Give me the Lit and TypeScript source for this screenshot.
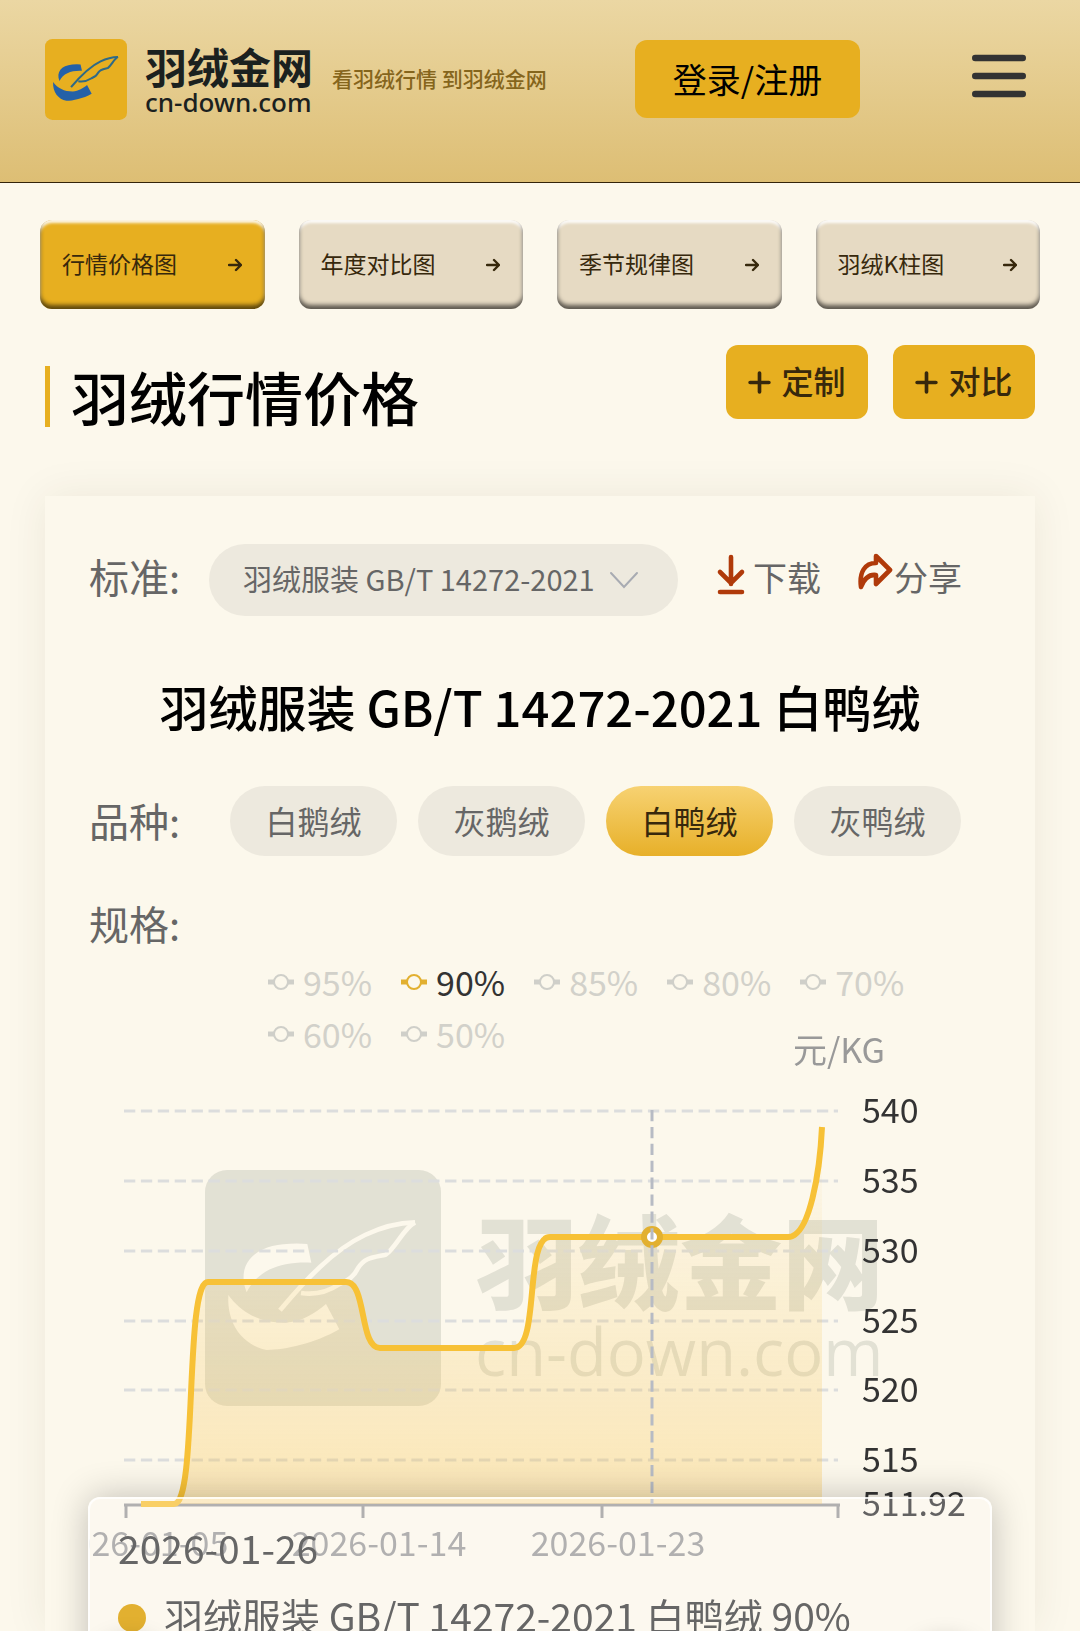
import { LitElement, html, css, svg } from "lit";
import { customElement, property, state } from "lit/decorators.js";
import { classMap } from "lit/directives/class-map.js";

const quill = svg`
  <path class="mark" d="M125 367C95 290 140 232 235 223Q270 219 307 222L319 278C225 274 160 300 125 367Z"/>
  <path class="mark" d="M70 375C110 430 165 458 240 458C290 456 330 430 363 402L403 478C330 520 240 540 185 540C115 525 65 465 70 375Z"/>
  <path class="feather" d="M225 421C300 330 385 240 480 195C540 166 590 158 630 157"/>
  <path class="feather" d="M630 157C594 176 574 232 542 254C505 262 478 262 458 296C446 322 420 336 402 343C362 370 322 374 288 369"/>`;

@customElement("brand-logo")
export class BrandLogo extends LitElement {
  static styles = css`
    .brand { display: flex; align-items: center; color: #1b211f; text-decoration: none; }
    .badge { width: 82px; height: 81px; flex: none; }
    .tile { fill: #e7af20; }
    .mark { fill: #2461a8; }
    .feather { fill: none; stroke: #2f6a86; stroke-width: 18; stroke-linejoin: round; }
    .words { margin-left: 18px; padding-bottom: 3px; display: flex; flex-direction: column; }
    .name { font-size: 42px; line-height: 48px; font-weight: 700; }
    .site { font-family: "Noto Sans", "Open Sans", sans-serif; font-size: 26px; line-height: 25px; font-weight: 500; }
    .motto { margin-left: 19px; padding-bottom: 4px; font-size: 21px; font-weight: 500; color: #85651c; white-space: nowrap; }
  `;
  render() {
    return html`<a class="brand" href="#">
      <svg class="badge" viewBox="0 0 708 708" preserveAspectRatio="none" aria-hidden="true">
        <rect class="tile" width="708" height="708" rx="64"/>${quill}
      </svg>
      <span class="words"><span class="name">羽绒金网</span><span class="site">cn-down.com</span></span>
      <span class="motto">看羽绒行情 到羽绒金网</span>
    </a>`;
  }
}

@customElement("price-chart")
export class PriceChart extends LitElement {
  static styles = css`
    :host { display: block; }
    .chart { display: block; width: 100%; height: auto; overflow: hidden; }
    .grid { stroke: #dcdddd; stroke-width: 3; stroke-dasharray: 11.3 5.6; }
    .axis { stroke: #999; stroke-width: 3; fill: none; }
    .series { stroke: #f7c136; stroke-width: 6; fill: none; }
    .pointer { stroke: #b7bbc4; stroke-width: 3; stroke-dasharray: 11.3 5.6; }
    .point { fill: #fff; stroke: #e2b030; stroke-width: 6; }
    .watermark { opacity: .15; fill: #555f53; }
    .mark { fill: #000; }
    .feather { fill: none; stroke: #000; stroke-width: 14; stroke-linejoin: round; }
    .wm-name { font-size: 102px; font-weight: 900; }
    .wm-site { font-family: "Open Sans", "Noto Sans", sans-serif; font-size: 65px; }
    .value { font-size: 34px; fill: #333; }
    .date { font-size: 34px; fill: #999; text-anchor: middle; }
    .unit { font-size: 34px; fill: #999; }
  `;
  private values = [
    { label: "540", y: 1111 }, { label: "535", y: 1181 }, { label: "530", y: 1251 },
    { label: "525", y: 1321 }, { label: "520", y: 1390 }, { label: "515", y: 1460 },
  ];
  private dates = [
    { label: "2026-01-05", x: 141 }, { label: "2026-01-14", x: 379 }, { label: "2026-01-23", x: 618 },
  ];
  render() {
    const line = "M141 1504H174C198 1504 184 1282 208 1282H346C367 1282 359 1348 380 1348H514C540 1348 524 1237 550 1237H788C810 1237 820 1170 822 1127";
    return html`<svg class="chart" viewBox="89 1031 902 600" role="img" aria-label="白鸭绒 90% 价格走势">
      <defs>
        <linearGradient id="area" x1="0" y1="1127" x2="0" y2="1504" gradientUnits="userSpaceOnUse">
          <stop offset="0" stop-color="#f7c044" stop-opacity="0"/>
          <stop offset="1" stop-color="#f7c044" stop-opacity="0.32"/>
        </linearGradient>
        <mask id="cut" maskUnits="userSpaceOnUse" x="0" y="0" width="708" height="708">
          <rect width="708" height="708" fill="#fff"/>${quill}
        </mask>
      </defs>
      <g class="watermark">
        <svg x="205" y="1170" width="236" height="236" viewBox="0 0 708 708">
          <rect width="708" height="708" rx="66" mask="url(#cut)"/>
        </svg>
        <text class="wm-name" x="476" y="1302">羽绒金网</text>
        <text class="wm-site" x="475" y="1376">cn-down.com</text>
      </g>
      ${this.values.map(v => svg`<line class="grid" x1="124" x2="838" y1=${v.y} y2=${v.y}/>`)}
      <path class="axis" d="M124 1505H840M126 1505V1518M363 1505V1518M602 1505V1518M838 1505V1518"/>
      <path d="${line}V1504H141Z" fill="url(#area)"/>
      <path class="series" d=${line}/>
      <circle class="point" cx="652" cy="1237" r="8"/>
      <line class="pointer" x1="652" x2="652" y1="1110" y2="1504"/>
      <text class="unit" x="793" y="1063">元/KG</text>
      ${this.values.map(v => svg`<text class="value" x="862" y=${v.y + 12}>${v.label}</text>`)}
      <text class="value" x="862" y="1516">511.92</text>
      ${this.dates.map(d => svg`<text class="date" x=${d.x} y="1556">${d.label}</text>`)}
    </svg>`;
  }
}

@customElement("app-root")
export class AppRoot extends LitElement {
  static styles = css`
    :host {
      display: block; height: 100vh; overflow: hidden; background: #fcf8ec; color: #000;
      font-family: "Noto Sans CJK SC", "Noto Sans", sans-serif;
    }
    * { box-sizing: border-box; }
    button, select { font-family: inherit; border: 0; margin: 0; padding: 0; cursor: pointer; }
    .top {
      display: flex; justify-content: space-between; align-items: flex-start;
      padding: 39px 54px 62px 45px; border-bottom: 1px solid #33240a;
      background: linear-gradient(#ebd7a3, #ddbe74);
    }
    .actions { display: flex; gap: 112px; align-items: center; padding-top: 1px; }
    .login { width: 225px; height: 78px; padding-bottom: 2px; border-radius: 12px; background: #e7af20; font-size: 34px; color: #000; }
    .menu { background: none; width: 54px; height: 54px; }
    .menu svg { display: block; }
    .tabs { display: grid; grid-template-columns: repeat(4, 1fr); gap: 34px; padding: 37px 40px 0; }
    .tab {
      display: flex; justify-content: space-between; align-items: center; height: 89px; padding: 0 23px 0 22px;
      border-radius: 12px; background: #e6dac3; color: #37280c; font-size: 23px; text-decoration: none;
      box-shadow: inset 0 -4px 4px rgba(0, 0, 0, .6), inset 0 3px 3px rgba(255, 255, 255, .9);
    }
    .tab.on { background: #e7af20; }
    .tab span { padding-bottom: 4px; }
    .head { display: flex; justify-content: space-between; align-items: flex-start; padding: 36px 45px 0; }
    .title {
      margin: 21px 0 0; padding-left: 21px; border-left: 5px solid #e7af20;
      font-size: 58px; line-height: 61px; font-weight: 500;
    }
    .tools { display: flex; gap: 25px; }
    .tool {
      display: flex; align-items: center; justify-content: center; gap: 10px; width: 142px; height: 74px;
      border-radius: 12px; background: #e7af20; color: #37280c; font-size: 32px; font-weight: 500;
    }
    .tool span { padding-bottom: 4px; }
    .card { margin: 69px 45px 0; padding: 48px 44px 0; background: #fcf8ec; box-shadow: 0 0 40px rgba(60, 50, 20, .08); }
    .row { display: flex; align-items: center; color: #666; }
    .label { font-size: 40px; line-height: 64px; padding-bottom: 2px; flex: none; }
    .standard { width: 120px; padding-bottom: 8px; }
    .variety { width: 141px; }
    .pick {
      display: flex; align-items: center; width: 469px; height: 72px; padding: 0 39px 0 34px;
      border-radius: 36px; background: #ede9de;
    }
    .pick select {
      flex: 1; min-width: 0; height: 72px; padding-bottom: 4px; appearance: none; background: none;
      color: #666; font-size: 29px; outline: none;
    }
    .link { display: flex; align-items: center; padding-bottom: 8px; color: #666; font-size: 34px; text-decoration: none; }
    .link svg { flex: none; margin-bottom: 3px; }
    .download { margin-left: 38px; gap: 6px; }
    .share { margin-left: 36px; gap: 1px; }
    .share svg { margin-bottom: 8px; }
    .subject { margin: 54px 0 44px; font-size: 49px; line-height: 72px; font-weight: 500; text-align: center; }
    .kinds { display: flex; flex: 1; gap: 21px; padding-right: 30px; }
    .kind { flex: 1; height: 70px; padding-bottom: 2px; border-radius: 35px; background: #ede9de; color: #666; font-size: 32px; }
    .kind.on { background: linear-gradient(#f7d272, #e7b029); color: #37280c; }
    .spec { margin-top: 35px; }
    .plot { position: relative; }
    .legend { display: flex; flex-wrap: wrap; column-gap: 29px; padding: 0 80px 0 179px; }
    .series {
      display: flex; align-items: center; gap: 9px; height: 52px; padding-bottom: 2px; background: none;
      color: #d2d1ca; font-size: 34px; line-height: 50px;
    }
    .series.on { color: #333; }
    .series svg { flex: none; color: #cfcfc9; margin-bottom: 1px; }
    .series.on svg { color: #e2b030; }
    .chart { margin-top: -30px; }
    .tip {
      position: absolute; top: 540px; left: -1px; right: -1px; padding: 14px 28px 40px;
      border: 2px solid rgba(255, 255, 255, .8); border-radius: 12px; background: rgba(255, 249, 251, .24);
      box-shadow: 0 0 36px rgba(0, 0, 0, .24); color: #666; font-size: 39px; line-height: 68px;
    }
    .entry { display: flex; align-items: center; gap: 18px; white-space: nowrap; }
    .dot { width: 28px; height: 28px; margin-top: 5px; border-radius: 50%; background: #e2b030; }
    .orb {
      position: fixed; bottom: -86px; width: 76px; height: 76px; border-radius: 50%;
      background: #fff; box-shadow: 0 0 24px rgba(0, 0, 0, .25);
    }
    .orb.left { left: 92px; }
    .orb.right { right: 97px; }
  `;

  @property({ type: String }) standard = "羽绒服装 GB/T 14272-2021";
  @state() private kind = "白鸭绒";
  @state() private spec = "90%";

  private tabs = ["行情价格图", "年度对比图", "季节规律图", "羽绒K柱图"];
  private kinds = ["白鹅绒", "灰鹅绒", "白鸭绒", "灰鸭绒"];
  private specs = ["95%", "90%", "85%", "80%", "70%", "60%", "50%"];

  private plus = () => html`<svg width="23" height="23" viewBox="0 0 22 22" fill="none" stroke="currentColor" stroke-width="3.5" stroke-linecap="round" aria-hidden="true"><path d="M11 2V20M2 11H20"/></svg>`;

  render() {
    return html`
      <header class="top">
        <brand-logo></brand-logo>
        <div class="actions">
          <button class="login">登录/注册</button>
          <button class="menu" aria-label="菜单">
            <svg width="54" height="54" viewBox="0 0 54 54" stroke="#333" stroke-width="6.6" stroke-linecap="round"><path d="M3.3 6H50.7M3.3 24H50.7M3.3 42H50.7"/></svg>
          </button>
        </div>
      </header>
      <nav class="tabs">
        ${this.tabs.map((t, i) => html`<a href="#" class=${classMap({ tab: true, on: i === 0 })}><span>${t}</span>
          <svg width="14" height="14" viewBox="0 0 14 14" fill="none" stroke="currentColor" stroke-width="2.4" stroke-linecap="round" stroke-linejoin="round" aria-hidden="true"><path d="M1 7H13M8 2L13 7L8 12"/></svg></a>`)}
      </nav>
      <div class="head">
        <h1 class="title">羽绒行情价格</h1>
        <div class="tools">
          <button class="tool">${this.plus()}<span>定制</span></button>
          <button class="tool">${this.plus()}<span>对比</span></button>
        </div>
      </div>
      <main class="card">
        <div class="row">
          <label class="label standard" for="standard">标准:</label>
          <span class="pick">
            <select id="standard"><option>${this.standard}</option></select>
            <svg width="30" height="18" viewBox="0 0 30 18" fill="none" stroke="#a8abb2" stroke-width="2" stroke-linecap="round" aria-hidden="true"><path d="M2 2L15 16L28 2"/></svg>
          </span>
          <a class="link download" href="#">
            <svg width="31" height="42" viewBox="0 0 31 42" fill="none" stroke="#b03a0a" stroke-width="4.6" stroke-linecap="round" aria-hidden="true"><path d="M15 3V30M4 18L15 29L26 18M4 38H26"/></svg>下载</a>
          <a class="link share" href="#">
            <svg width="36" height="40" viewBox="0 0 36 40" fill="none" stroke="#b03a0a" stroke-width="4.6" stroke-linejoin="round" aria-hidden="true"><path d="M19 4L33 18L19 32V23C11 22 7 27 4 35C2 20 8 11 19 11Z"/></svg>分享</a>
        </div>
        <h2 class="subject">${this.standard} ${this.kind}</h2>
        <div class="row">
          <span class="label variety">品种:</span>
          <div class="kinds">
            ${this.kinds.map(k => html`<button class=${classMap({ kind: true, on: k === this.kind })} @click=${() => (this.kind = k)}>${k}</button>`)}
          </div>
        </div>
        <div class="row spec"><span class="label">规格:</span></div>
        <section class="plot">
          <div class="legend">
            ${this.specs.map(s => html`<button class=${classMap({ series: true, on: s === this.spec })} @click=${() => (this.spec = s)}>
              <svg width="26" height="18" viewBox="0 0 26 18" fill="none" stroke="currentColor" aria-hidden="true"><path stroke-width="5" d="M0 9H6M20 9H26"/><circle stroke-width="2" cx="13" cy="9" r="7"/></svg>${s}</button>`)}
          </div>
          <price-chart class="chart"></price-chart>
          <div class="tip">
            <div>2026-01-26</div>
            <div class="entry"><span class="dot"></span>${this.standard} ${this.kind} ${this.spec}</div>
          </div>
        </section>
      </main>
      <span class="orb left"></span>
      <span class="orb right"></span>
    `;
  }
}
